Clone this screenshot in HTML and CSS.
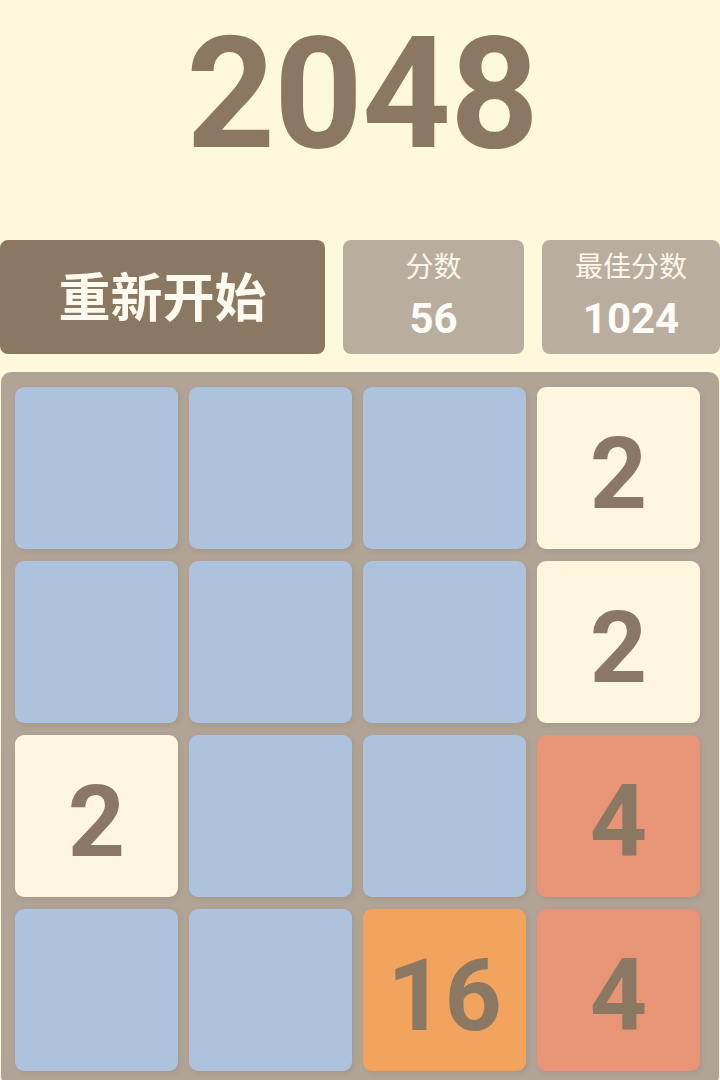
FILE: index.html
```html
<!DOCTYPE html>
<html lang="zh">
<head>
<meta charset="utf-8">
<title>2048</title>
<link rel="stylesheet" href="styles.css">
</head>
<body>
<div class="page">
  <h1 class="title">2048</h1>
  <div class="bar">
    <div class="restart">重新开始</div>
    <div class="score">
      <div class="label">分数</div>
      <div class="value">56</div>
    </div>
    <div class="score">
      <div class="label">最佳分数</div>
      <div class="value">1024</div>
    </div>
  </div>
  <div class="board">
    <div class="tile"></div>
    <div class="tile"></div>
    <div class="tile"></div>
    <div class="tile t2">2</div>
    <div class="tile"></div>
    <div class="tile"></div>
    <div class="tile"></div>
    <div class="tile t2">2</div>
    <div class="tile t2">2</div>
    <div class="tile"></div>
    <div class="tile"></div>
    <div class="tile t4">4</div>
    <div class="tile"></div>
    <div class="tile"></div>
    <div class="tile t16">16</div>
    <div class="tile t4">4</div>
  </div>
</div>
</body>
</html>
```

FILE: styles.css
```css
html, body {
  margin: 0;
  padding: 0;
  background: #fef8dc;
  overflow: hidden;
}
.page {
  width: 720px;
  height: 1080px;
  font-family: Roboto, "Noto Sans CJK SC", sans-serif;
  color: #8b7862;
}
.title {
  margin: 0;
  height: 240px;
  box-sizing: border-box;
  padding-top: 17px;
  font-size: 155px;
  line-height: 155px;
  font-weight: 700;
  text-align: center;
  letter-spacing: -1px;
  padding-left: 4px;
}
.bar {
  display: grid;
  grid-template-columns: 325px 181px 178px;
  column-gap: 18px;
  height: 114px;
}
.restart {
  background: #8b7862;
  color: #fffaf0;
  border-radius: 8px;
  display: flex;
  align-items: center;
  justify-content: center;
  font-family: "Noto Sans CJK SC", sans-serif;
  font-size: 52px;
  font-weight: 700;
  padding-bottom: 6px;
  box-sizing: border-box;
}
.score {
  background: #b9ada0;
  color: #fdf7ea;
  border-radius: 8px;
  display: flex;
  flex-direction: column;
  align-items: center;
  padding-top: 7px;
  box-sizing: border-box;
}
.label {
  font-family: "Noto Sans CJK SC", sans-serif;
  font-size: 28px;
  line-height: 36px;
}
.value {
  margin-top: 12px;
  font-family: Roboto, sans-serif;
  font-weight: 700;
  font-size: 42px;
  line-height: 48px;
  color: #fffdf8;
}
.board {
  margin-top: 18px;
  margin-left: 1px;
  width: 718px;
  box-sizing: border-box;
  background: #b1a497;
  border-radius: 10px;
  padding: 15px 15px 15px 14px;
  display: grid;
  grid-template-columns: repeat(4, 163px);
  grid-auto-rows: 162px;
  gap: 12px 11px;
}
.tile {
  background: #adc2dd;
  border-radius: 9px;
  display: flex;
  align-items: center;
  justify-content: center;
  padding-top: 10px;
  box-sizing: border-box;
  font-family: Roboto, sans-serif;
  font-weight: 700;
  font-size: 100px;
  color: #8b7862;
  box-shadow: 2px 2px 5px rgba(90, 70, 50, 0.12);
}
.t2 { background: #fef7de; }
.t4 { background: #e89477; }
.t16 { background: #f2a35e; }
```
